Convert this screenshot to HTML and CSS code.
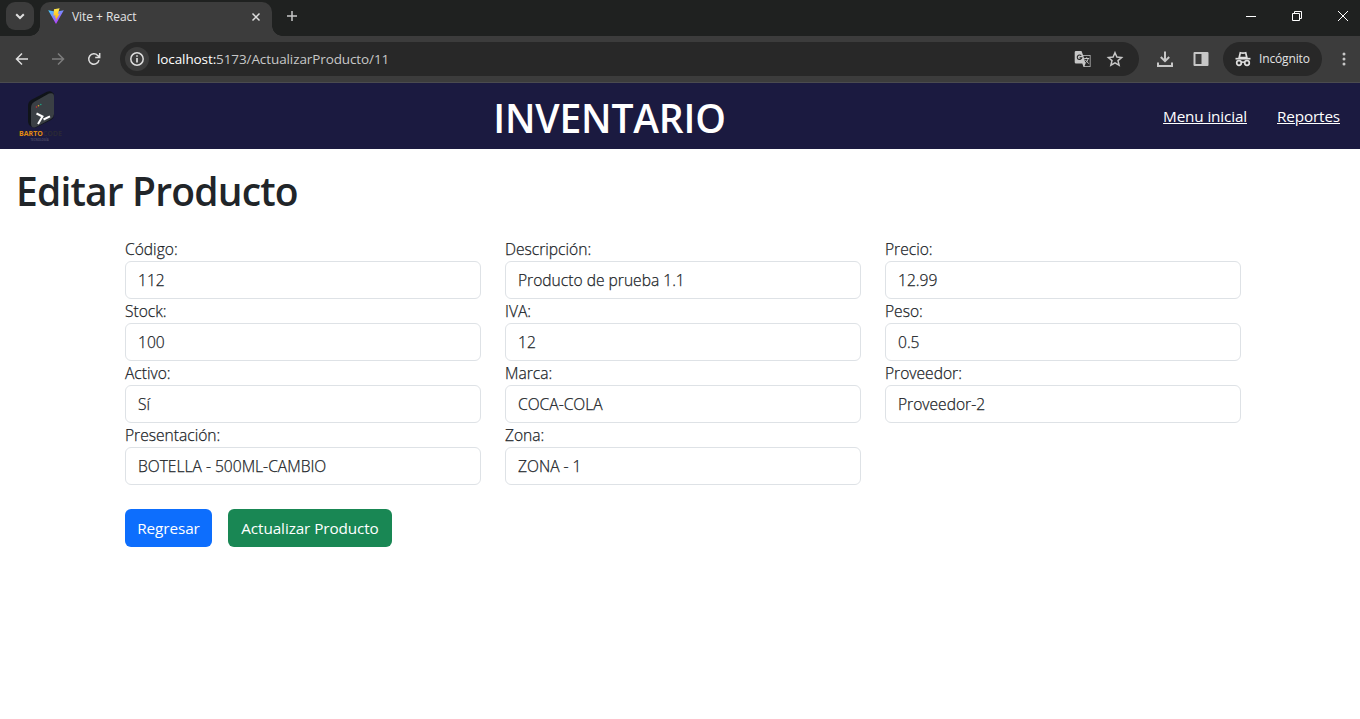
FILE: index.html
```html
<!DOCTYPE html>
<html lang="es">
<head>
<meta charset="utf-8">
<title>Vite + React</title>
<link rel="stylesheet" href="styles.css">
</head>
<body>
<header class="browser">
  <div class="tabstrip">
    <div class="tab-search"><svg width="28" height="28" viewBox="0 0 28 28"><path d="M10.2 12.2L14 16l3.800-3.800" class="line light w2"/></svg></div>
    <div class="tab">
      <svg width="16" height="17" viewBox="0 0 16 17">
        <defs>
          <linearGradient id="vite" x1="0" y1="0" x2="0.6" y2="1"><stop offset="0" stop-color="#41d1ff"/><stop offset="1" stop-color="#bd34fe"/></linearGradient>
          <linearGradient id="bolt" x1="0" y1="0" x2="0" y2="1"><stop offset="0" stop-color="#ffea50"/><stop offset="1" stop-color="#ffa800"/></linearGradient>
        </defs>
        <path d="M.2 2.300L8 3.700l7.800-1.400L8 16z" fill="url(#vite)"/>
        <path d="M11.600.2L6 1.300l-.5 6.400 2-.4-.6 2.600 1.300-.3-.7 3.400 4.300-7.400-2 .3z" fill="url(#bolt)"/>
      </svg>
      <span class="tab-title">Vite + React</span>
      <svg class="tab-close" width="16" height="16" viewBox="0 0 16 16"><path d="M4.500 4.500l7 7m0-7l-7 7" class="line light w15"/></svg>
    </div>
    <svg class="new-tab" width="20" height="20" viewBox="0 0 20 20"><path d="M10 5v10M5 10h10" class="line grey w15"/></svg>
    <div class="window-buttons">
      <svg width="46" height="32" viewBox="0 0 46 32"><path d="M18 16.500h10" class="line white w1"/></svg>
      <svg width="46" height="32" viewBox="0 0 46 32"><path d="M18.500 13.500h7v7h-7zM20.500 13.500v-2h7v7h-2" class="line white w1"/></svg>
      <svg width="46" height="32" viewBox="0 0 46 32"><path d="M18 11l10 10m0-10L18 21" class="line white w1"/></svg>
    </div>
  </div>
  <div class="toolbar">
    <svg class="nav-icon" width="20" height="20" viewBox="0 0 20 20"><path d="M16 10H4.500m5.500-5.500L4.500 10l5.500 5.500" class="line light w15"/></svg>
    <svg class="nav-icon" width="20" height="20" viewBox="0 0 20 20"><path d="M4 10h11.500M10 4.500l5.500 5.500-5.500 5.500" class="line dim w15"/></svg>
    <svg class="nav-icon" width="20" height="20" viewBox="0 0 20 20"><path d="M15 11.200a5.200 5.200 0 1 1-1.300-4.800L15.500 8M15.700 4v4.500h-4.500" class="line light w15"/></svg>
    <div class="omnibox">
      <span class="site-info"><svg width="24" height="24" viewBox="0 0 24 24"><circle cx="12" cy="12" r="6.200" class="line light w15"/><path d="M12 11v4.400" class="line light w17"/><path d="M11.100 8.200h1.800v1.600h-1.800z" class="fill"/></svg></span>
      <span class="url"><span class="host">localhost:</span>5173/ActualizarProducto/11</span>
      <svg class="translate" width="18" height="18" viewBox="0 0 18 18">
        <path d="M2 1h5.500l1.500 4h7.500v12H9.500L8.300 13.500H2A1.300 1.300 0 0 1 .7 12.200V2.300A1.300 1.300 0 0 1 2 1z" class="fill"/>
        <path d="M9.300 5.700h6.500v10.500h-5.300l1-2.600z" class="field"/>
        <path d="M7.300 5.700a2.300 2.300 0 1 0 .5 2.200H5.500" class="line field-line"/>
        <path d="M10.200 8.500h5M12.700 7.300v1.200m1.500 0c-.5 2.200-1.800 3.700-3 4.500M11.200 9.800l3.600 3.900" class="line grey w1"/>
      </svg>
      <svg class="star" width="18" height="18" viewBox="0 0 18 18"><path d="M9 2.700l1.900 4.400 4.700.4-3.600 3.100 1.100 4.600L9 12.800l-4.100 2.400 1.100-4.600-3.600-3.100 4.700-.4z" class="line grey w15"/></svg>
    </div>
    <svg class="download" width="20" height="20" viewBox="0 0 20 20"><path d="M10 2.500v9M5.800 8l4.200 4.200L14.200 8" class="line grey w2"/><path d="M3 13.500v3.500h14v-3.500" class="line grey w2"/></svg>
    <svg class="panel" width="16" height="16" viewBox="0 0 16 16"><path fill-rule="evenodd" d="M1.500 1h13a1 1 0 0 1 1 1v12a1 1 0 0 1-1 1h-13a1 1 0 0 1-1-1V2a1 1 0 0 1 1-1zM2.500 3v10h6V3z" class="fill"/></svg>
    <div class="incognito">
      <svg width="18" height="18" viewBox="0 0 18 18"><path d="M5.200 7.500L6.300 2.800Q9 3.600 11.700 2.800l1.100 4.700z" class="line light w17"/><path d="M1.500 8.700h15" class="line light w17"/><circle cx="5" cy="13" r="2.300" class="line light w17"/><circle cx="13" cy="13" r="2.300" class="line light w17"/><path d="M7.300 12.500q1.700-.8 3.400 0" class="line light w15"/></svg>
      <span>Incógnito</span>
    </div>
    <svg class="dots" width="4" height="16" viewBox="0 0 4 16"><circle cx="2" cy="3" r="1.500" class="fill"/><circle cx="2" cy="8" r="1.500" class="fill"/><circle cx="2" cy="13" r="1.500" class="fill"/></svg>
  </div>
</header>
<nav class="navbar">
  <svg class="logo" width="50" height="52" viewBox="0 0 50 52">
    <path d="M9 17q0-4 3-6L28 2.700q3-1.200 5 .3l2 2V26q0 3-3 5L17 38.500q-2 .8-4.500-.8Q9 36 9 32z" fill="#101419"/>
    <path d="M12 19q0-4 3-6L30 4.500q5-1.500 5 3V25q0 3-3 5L16.500 38.200q-4.500 1.500-4.500-4z" fill="#3a3f44"/>
    <circle cx="17.500" cy="18" r=".8" fill="#d33036"/><circle cx="19.500" cy="16.700" r=".8" fill="#d7a52b"/><circle cx="21.800" cy="15.500" r=".8" fill="#21a083"/>
    <path d="M17.500 24.500l6 3-4.500 7.500M24.500 30.500l6.500-3.200" class="line white w2"/>
    <text x="0" y="47" class="brand">BARTO<tspan class="brand-dark">CODE</tspan></text>
    <text x="11.500" y="51.500" class="brand-sub">TECNOLOGÍA</text>
  </svg>
  <h1 class="brand-title">INVENTARIO</h1>
  <div class="links"><a>Menu inicial</a><a>Reportes</a></div>
</nav>
<main>
  <h1 class="page-title">Editar Producto</h1>
  <form class="form">
    <div class="grid">
      <label>Código:<input value="112"></label>
      <label>Descripción:<input value="Producto de prueba 1.1"></label>
      <label>Precio:<input value="12.99"></label>
      <label>Stock:<input value="100"></label>
      <label>IVA:<input value="12"></label>
      <label>Peso:<input value="0.5"></label>
      <label>Activo:<input value="Sí"></label>
      <label>Marca:<input value="COCA-COLA"></label>
      <label>Proveedor:<input value="Proveedor-2"></label>
      <label>Presentación:<input value="BOTELLA - 500ML-CAMBIO"></label>
      <label>Zona:<input value="ZONA - 1"></label>
    </div>
    <div class="actions">
      <button type="button" class="btn back">Regresar</button>
      <button type="button" class="btn update">Actualizar Producto</button>
    </div>
  </form>
</main>
</body>
</html>
```
FILE: styles.css
```css
* { box-sizing: border-box; }
body { margin: 0; height: 719px; overflow: hidden; background: #fff; color: #212529; font: 400 15.300px/24px "Open Sans", "Noto Sans", sans-serif; }
svg { display: block; flex: none; }
.line { fill: none; }
.light { stroke: #dedede; }
.grey { stroke: #c7c7c7; }
.dim { stroke: #7d7d7d; }
.white { stroke: #fff; }
.w1 { stroke-width: 1; }
.w15 { stroke-width: 1.5; }
.w17 { stroke-width: 1.7; }
.w2 { stroke-width: 2; }
.fill { fill: #c7c7c7; }
.field { fill: #282828; }
.field-line { stroke: #282828; stroke-width: 1.1; }

.browser { height: 83px; background: #3c3c3c; border-bottom: 1px solid #4b4b4f; }
.tabstrip { height: 36px; display: flex; background: #1f2120; }
.tab-search { width: 28px; height: 28px; margin: 2px 6px 0; border-radius: 9px; background: #3c3c3c; }
.tab { position: relative; width: 232px; height: 34px; margin-top: 2px; padding: 0 8px; display: flex; align-items: center; background: #3c3c3c; border-radius: 10px 10px 0 0; padding-bottom: 5px; }
.tab::before, .tab::after { content: ""; position: absolute; bottom: 0; width: 10px; height: 10px; }
.tab::before { left: -10px; background: radial-gradient(circle at 0 0, transparent 9.500px, #3c3c3c 10px); }
.tab::after { right: -10px; background: radial-gradient(circle at 100% 0, transparent 9.500px, #3c3c3c 10px); }
.tab-title { margin-left: 8px; font-size: 12px; letter-spacing: -0.05px; color: #e3e3e3; }
.tab-close { margin-left: auto; }
.new-tab { margin: 6px 0 0 10px; }
.window-buttons { display: flex; margin-left: auto; margin-right: -6px; }
.toolbar { height: 46px; padding: 6px 14px 6px 12px; display: flex; align-items: center; }
.nav-icon { margin-right: 16px; }
.omnibox { width: 1019px; height: 34px; padding: 0 15px 0 5px; display: flex; align-items: center; background: #282828; border-radius: 17px; }
.site-info { border-radius: 50%; background: #3c3c3c; }
.url { margin-left: 8px; font-size: 13.500px; letter-spacing: -0.1px; color: #c7c7c7; }
.host { color: #fff; }
.translate { margin-left: auto; }
.star { margin-left: 14px; }
.download { margin-left: 16px; }
.panel { margin-left: 18px; }
.incognito { width: 99px; height: 34px; margin-left: 14px; padding-left: 11px; display: flex; align-items: center; gap: 7px; border-radius: 17px; background: #282828; color: #e3e3e3; font-size: 12px; letter-spacing: -0.15px; }
.dots { margin-left: 20px; }

.navbar { height: 66px; padding: 0 20px 0 19px; display: grid; grid-template-columns: 50px 1fr auto; align-items: center; background: #1b1a40; color: #fff; }
.logo { overflow: visible; align-self: start; margin-top: 6px; }
.brand { font: 700 7px "Open Sans", sans-serif; fill: #e08a10; }
.brand-dark { fill: #292836; }
.brand-sub { font: 700 2.800px "Open Sans", sans-serif; fill: #4a4964; }
h1 { margin: 0; font-size: 39px; line-height: 48px; font-weight: 600; }
.brand-title { justify-self: center; margin-top: 4px; margin-right: 13px; letter-spacing: -0.2px; }
.links { display: flex; gap: 30px; letter-spacing: -0.15px; }
.links a { text-decoration: underline; }

.page-title { padding: 18px 0 0 16px; letter-spacing: -0.830px; }
.form { width: 1116px; margin: 22px 0 0 125px; }
.grid { display: grid; grid-template-columns: repeat(3, 1fr); column-gap: 24px; }
label { display: block; font-size: 15.600px; font-weight: 300; -webkit-text-stroke: 0.250px #212529; }
input { display: block; width: 100%; height: 38px; padding: 6px 12px; border: 1px solid #dee2e6; border-radius: 6px; background: #fff; color: inherit; font: inherit; -webkit-text-stroke: inherit; }
.actions { display: flex; gap: 16px; margin-top: 24px; }
.btn { height: 38px; padding: 0; border: 0; border-radius: 6px; color: #fff; font: inherit; letter-spacing: -0.1px; text-align: center; }
.back { width: 87px; background: #0d6efd; }
.update { width: 164px; background: #198754; }
```
